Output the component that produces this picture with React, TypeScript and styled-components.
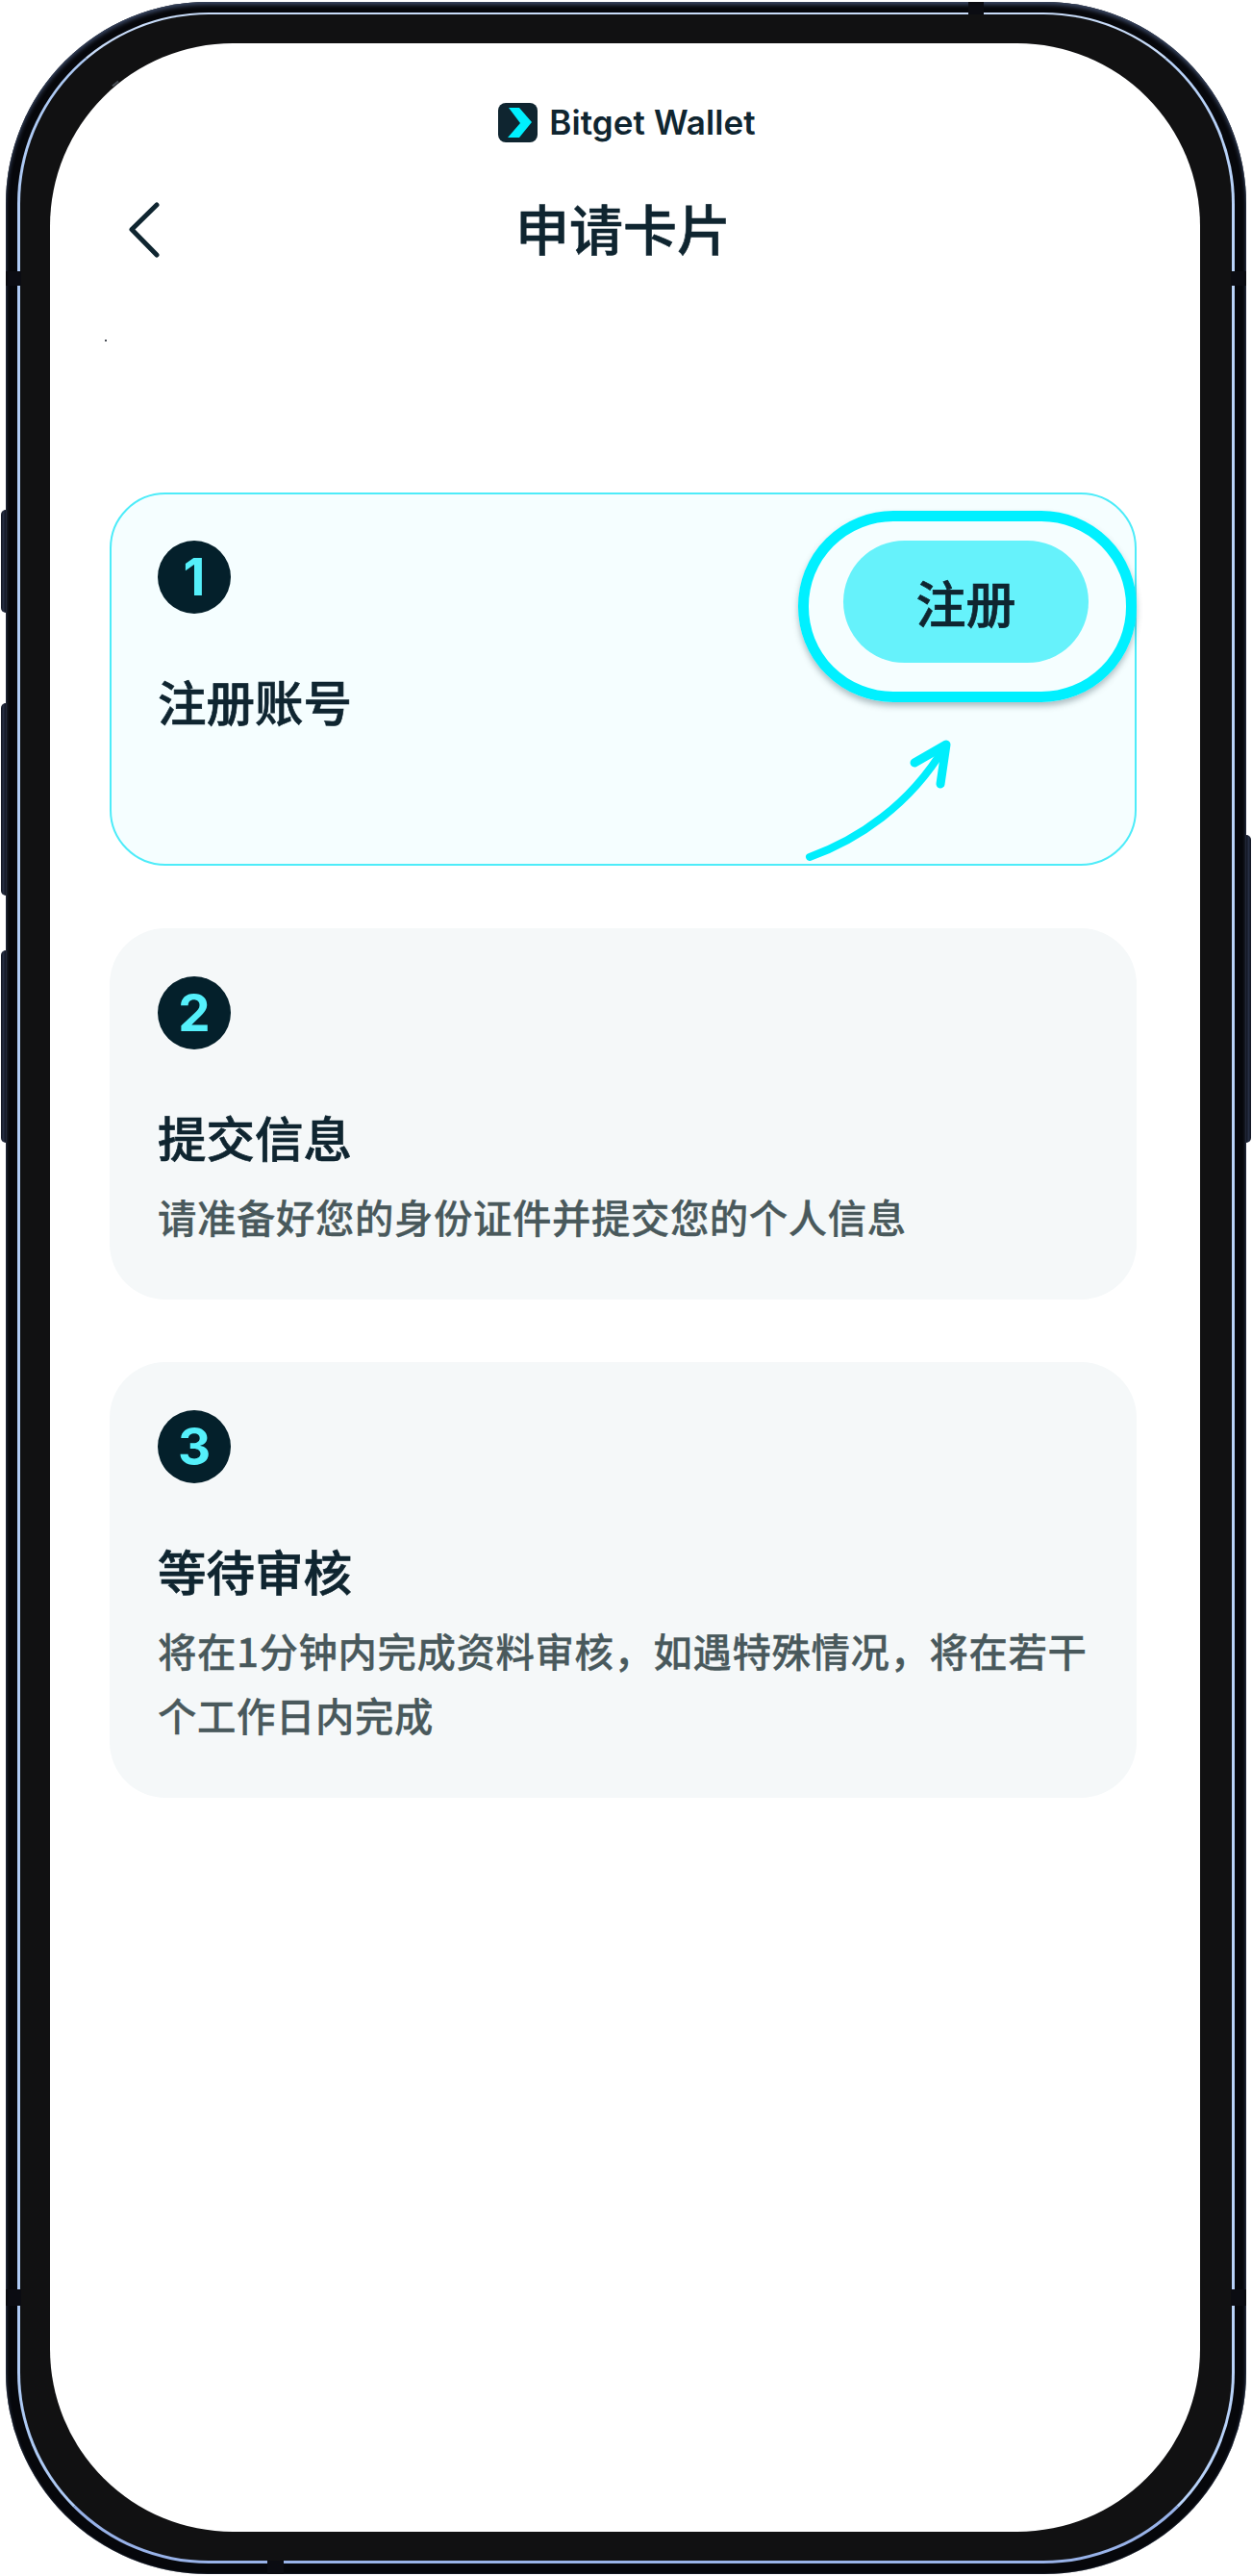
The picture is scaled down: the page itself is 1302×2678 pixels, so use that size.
import React from "react";
import styled, { createGlobalStyle } from "styled-components";

const Global = createGlobalStyle`
  html, body { margin: 0; padding: 0; background: #fff; }
  * { box-sizing: border-box; }
`;

const Page = styled.div`
  position: relative;
  width: 1302px;
  height: 2678px;
  padding: 2px 6px;
  background: #fff;
  overflow: hidden;
  font-family: "Noto Sans CJK SC", "Noto Sans", sans-serif;
`;

const Shell = styled.div`
  position: relative;
  height: 100%;
  padding: 11px 12px;
  border-radius: 210px;
  background: #06070b;
  box-shadow: inset 0 3px 4px #3a4762, inset 0 0 2px #2a3448;
`;

const Rim = styled.div`
  height: 100%;
  border-style: solid;
  border-width: 2px 3px 3px 3px;
  border-color: #c8dcf9 #b8d2f8 #98b2e8 #aecaf4;
  border-radius: 199px;
  background: #111112;
  padding: 30px 33px 30px 31px;
`;

const Screen = styled.main`
  position: relative;
  height: 100%;
  border-radius: 190px;
  background: #fff;
  padding: 62px 66px 0 62px;
`;

const Seam = styled.span<{ $x: number; $y: number; $w: number; $h: number }>`
  position: absolute;
  left: ${(p) => p.$x}px;
  top: ${(p) => p.$y}px;
  width: ${(p) => p.$w}px;
  height: ${(p) => p.$h}px;
  background: #0b0c12;
`;

const LeftKeys = styled.div`
  position: absolute;
  left: 1px;
  top: 530px;
  display: flex;
  flex-direction: column;
  gap: 94px;
`;

const KeyGroup = styled.div`
  display: flex;
  flex-direction: column;
  gap: 57px;
`;

const RightKeys = styled.div`
  position: absolute;
  left: 1296px;
  top: 868px;
`;

const SideKey = styled.span<{ $right?: boolean; $short?: boolean }>`
  display: block;
  width: 5px;
  height: ${(p) => (p.$right ? 320 : p.$short ? 107 : 200)}px;
  border-radius: ${(p) => (p.$right ? "0 5px 5px 0" : "5px 0 0 5px")};
  background: linear-gradient(90deg, #10141f, #252d42, #10141f);
`;

const Speck = styled.span<{ $x: number; $y: number; $w: number; $r: number }>`
  position: absolute;
  left: ${(p) => p.$x}px;
  top: ${(p) => p.$y}px;
  width: ${(p) => p.$w}px;
  height: 2px;
  background: #4a5058;
  transform: rotate(${(p) => p.$r}deg);
`;

const BrandRow = styled.div`
  display: flex;
  justify-content: center;
  align-items: center;
  gap: 12px;
  height: 41px;
  padding-left: 8px;
`;

const BrandName = styled.span`
  font-family: Inter, "Noto Sans", sans-serif;
  font-size: 35px;
  font-weight: 600;
  line-height: 41px;
  color: #0f2530;
  letter-spacing: 0.1px;
`;

const Header = styled.header`
  position: relative;
  display: flex;
  justify-content: center;
  align-items: center;
  height: 64px;
  margin-top: 56px;
  margin-bottom: 244px;
`;

const BackIcon = styled.svg`
  position: absolute;
  left: 19px;
  top: 6px;
`;

const Title = styled.h1`
  margin: 0;
  font-size: 56px;
  font-weight: 500;
  -webkit-text-stroke: 0.6px #0f2530;
  line-height: 64px;
  color: #0f2530;
`;

const Steps = styled.div`
  display: flex;
  flex-direction: column;
  gap: 65px;
`;

const Card = styled.section<{ $active?: boolean }>`
  padding: 50px 48px 53px 50px;
  border-radius: 58px;
  background: #f5f8f9;
  ${(p) =>
    p.$active &&
    `
    display: flex;
    justify-content: space-between;
    align-items: flex-start;
    height: 388px;
    padding: 48px 48px 0 48px;
    border: 2px solid #4decf9;
    background: #f5feff;
  `}
`;

const Badge = styled.div`
  display: flex;
  align-items: center;
  justify-content: center;
  width: 76px;
  height: 76px;
  border-radius: 50%;
  background: #04202b;
  color: #55f0fb;
  font-family: Inter, "Noto Sans", sans-serif;
  font-size: 53px;
  font-weight: 700;
  line-height: 1;
`;

const StepTitle = styled.h2`
  margin: 60px 0 0;
  font-size: 50.5px;
  font-weight: 500;
  -webkit-text-stroke: 0.7px #0f2530;
  line-height: 60px;
  color: #0f2530;
`;

const StepText = styled.p`
  margin: 20px 0 0;
  font-size: 40.4px;
  letter-spacing: 0.6px;
  font-weight: 500;
  -webkit-text-stroke: 0.3px #49595c;
  line-height: 67px;
  color: #49595c;
`;

const ButtonSpot = styled.div`
  position: relative;
  width: 255px;
  height: 127px;
`;

const RegisterButton = styled.button`
  display: block;
  width: 100%;
  height: 100%;
  border: 0;
  padding: 0;
  border-radius: 64px;
  background: #66f2fb;
  color: #0f2530;
  font-family: inherit;
  font-size: 52px;
  font-weight: 500;
  -webkit-text-stroke: 0.7px #0f2530;
  line-height: 1;
`;

const FocusRing = styled.div`
  position: absolute;
  inset: -31px -50px -41px -47px;
  border: 11px solid #00f0ff;
  border-radius: 99px;
  box-shadow: 0 4px 6px rgba(40, 70, 80, 0.35);
  pointer-events: none;
`;

const Pointer = styled.svg`
  position: absolute;
  left: -35px;
  top: 207px;
  overflow: visible;
`;

const LogoMark = () => (
  <svg width="41" height="41" viewBox="0 0 41 41" aria-hidden="true">
    <rect width="41" height="41" rx="8" fill="#0f2530" />
    <path d="M11 5H22L35 20L22 36H10L23 21Z" fill="#00f0ff" />
  </svg>
);

const steps = [
  { n: 2, title: "提交信息", text: "请准备好您的身份证件并提交您的个人信息" },
  { n: 3, title: "等待审核", text: "将在1分钟内完成资料审核，如遇特殊情况，将在若干个工作日内完成" },
];

export default function App() {
  return (
    <Page>
      <Global />
      <Shell>
        <Rim>
          <Screen>
            <BrandRow>
              <LogoMark />
              <BrandName>Bitget Wallet</BrandName>
            </BrandRow>
            <Header>
              <BackIcon width="34" height="60" viewBox="0 0 34 60" fill="none" aria-hidden="true">
                <path d="M30 3L4 28.5L30 55" stroke="#0f2530" strokeWidth="5" strokeLinecap="round" strokeLinejoin="round" />
              </BackIcon>
              <Title>申请卡片</Title>
            </Header>
            <Steps>
              <Card $active>
                <div>
                  <Badge>1</Badge>
                  <StepTitle>注册账号</StepTitle>
                </div>
                <ButtonSpot>
                  <RegisterButton>注册</RegisterButton>
                  <FocusRing />
                  <Pointer width="150" height="125" viewBox="0 0 150 125" fill="none" aria-hidden="true">
                    <path d="M0 122C50 104 104 68 140 8" stroke="#00eefc" strokeWidth="8" strokeLinecap="round" />
                    <path d="M109 24L142 5L136 46" stroke="#00eefc" strokeWidth="9" strokeLinecap="round" strokeLinejoin="round" />
                  </Pointer>
                </ButtonSpot>
              </Card>
              {steps.map((s) => (
                <Card key={s.n}>
                  <Badge>{s.n}</Badge>
                  <StepTitle>{s.title}</StepTitle>
                  <StepText>{s.text}</StepText>
                </Card>
              ))}
            </Steps>
          </Screen>
        </Rim>
        <Seam $x={1001} $y={0} $w={16} $h={13} />
        <Seam $x={0} $y={280} $w={16} $h={15} />
        <Seam $x={1274} $y={280} $w={16} $h={15} />
        <Seam $x={0} $y={2378} $w={16} $h={17} />
        <Seam $x={1274} $y={2378} $w={16} $h={17} />
        <Seam $x={272} $y={2660} $w={17} $h={14} />
      </Shell>
      <LeftKeys>
        <SideKey $short />
        <KeyGroup>
          <SideKey />
          <SideKey />
        </KeyGroup>
      </LeftKeys>
      <RightKeys>
        <SideKey $right />
      </RightKeys>
      <Speck $x={116} $y={86} $w={8} $r={-40} />
      <Speck $x={109} $y={353} $w={2} $r={0} />
    </Page>
  );
}
